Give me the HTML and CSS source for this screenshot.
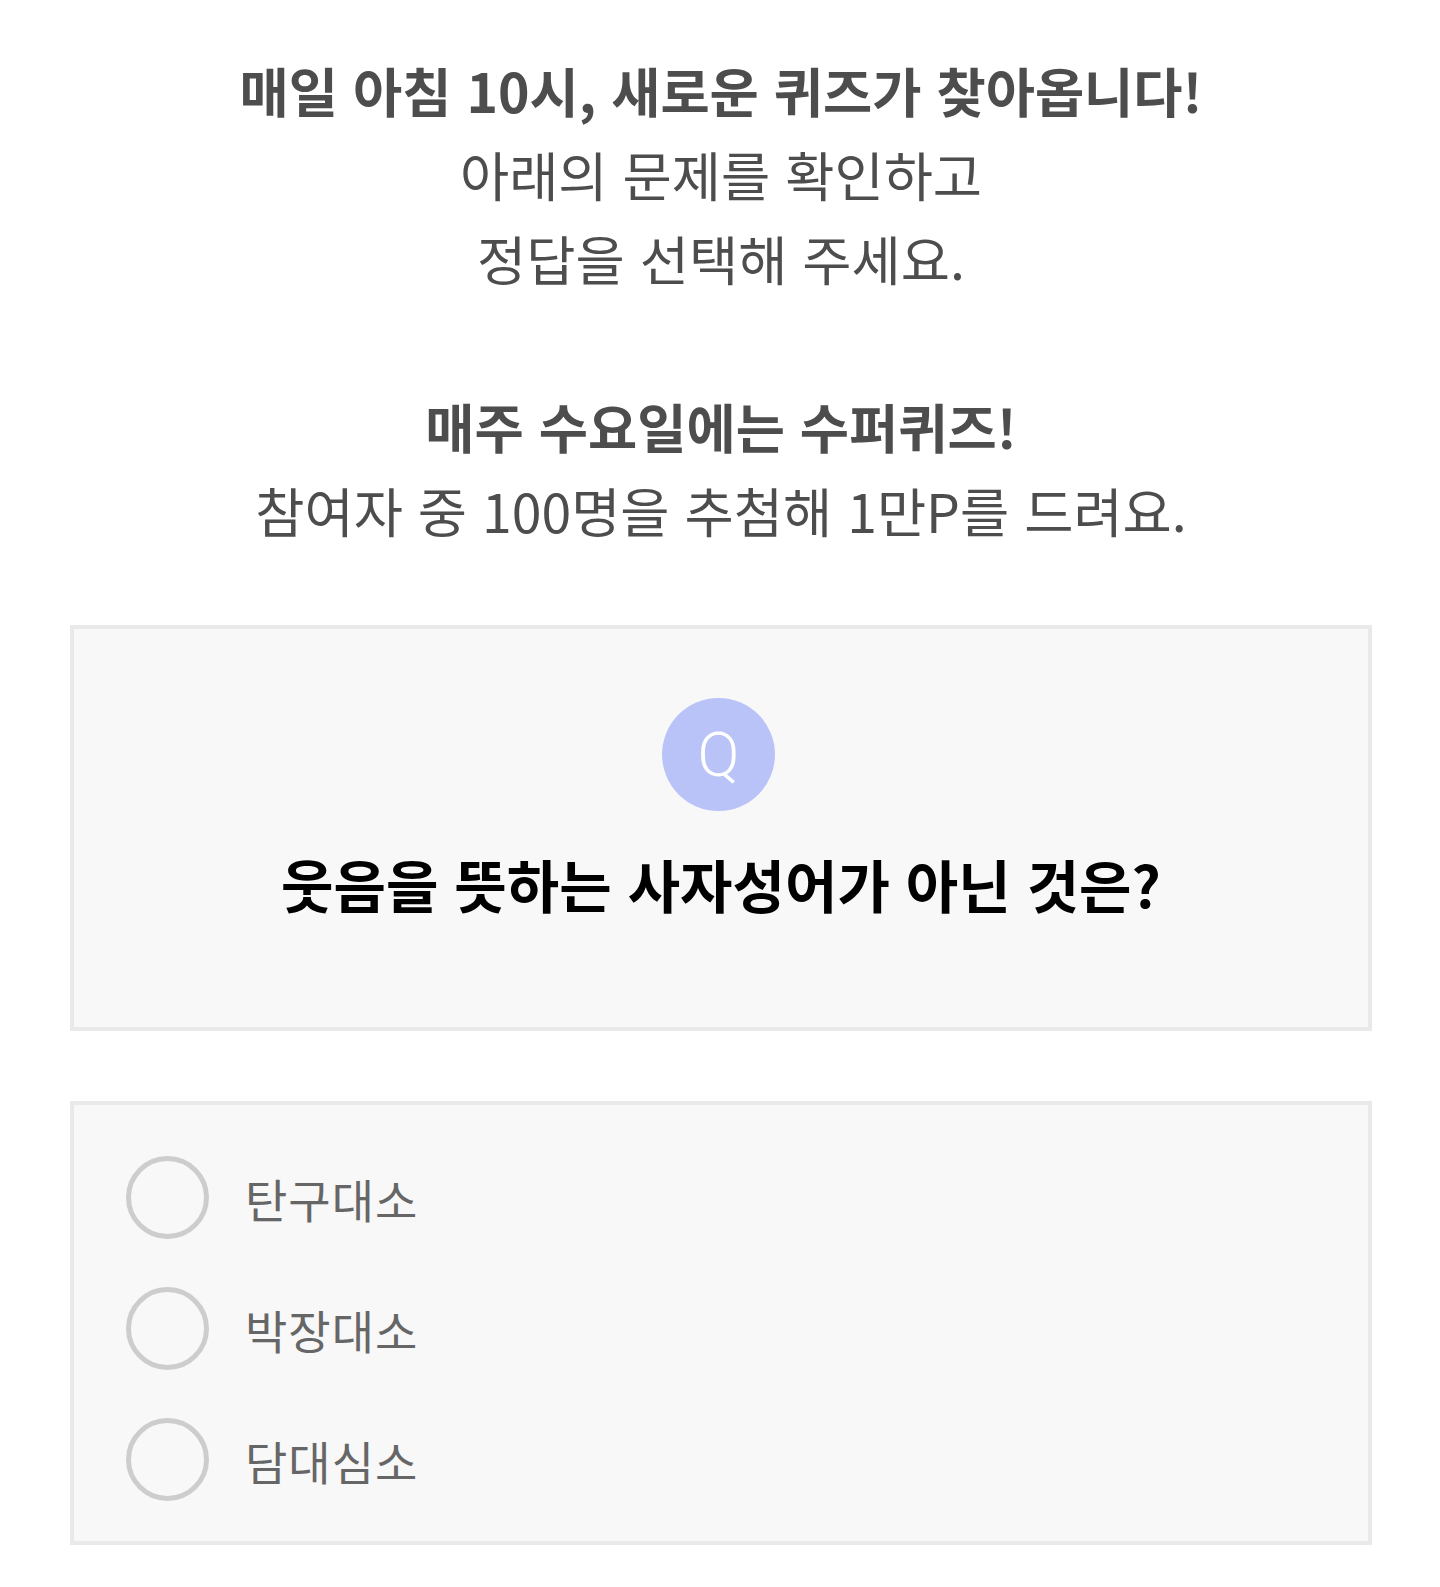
FILE: index.html
```html
<!DOCTYPE html>
<html lang="ko">
<head>
<meta charset="utf-8">
<title>오늘의 퀴즈</title>
<link rel="stylesheet" href="styles.css">
</head>
<body>
<div class="page">
  <p class="intro">
    <strong>매일 아침 10시, 새로운 퀴즈가 찾아옵니다!</strong><br>
    아래의 문제를 확인하고<br>
    정답을 선택해 주세요.<br>
    <br>
    <strong>매주 수요일에는 수퍼퀴즈!</strong><br>
    참여자 중 100명을 추첨해 1만P를 드려요.
  </p>

  <section class="quiz-box">
    <div class="q-badge">Q</div>
    <h2 class="question">웃음을 뜻하는 사자성어가 아닌 것은?</h2>
  </section>

  <ul class="options">
    <li class="option"><span class="radio"></span><span class="label">탄구대소</span></li>
    <li class="option"><span class="radio"></span><span class="label">박장대소</span></li>
    <li class="option"><span class="radio"></span><span class="label">담대심소</span></li>
  </ul>
</div>
</body>
</html>
```

FILE: styles.css
```css
html, body {
  margin: 0;
  padding: 0;
  background: #ffffff;
}

body {
  font-family: "Noto Sans CJK KR", "Noto Sans", sans-serif;
}

.page {
  padding: 48px 68px 40px 70px;
}

.intro {
  margin: 0 0 73px 0;
  text-align: center;
  font-size: 53.5px;
  line-height: 84px;
  color: #4d4d4d;
  font-weight: 400;
}

.intro strong {
  font-weight: 700;
}

.quiz-box {
  border: 4px solid #e9e9e9;
  background: #f8f8f8;
  padding: 69px 0 104px 0;
  display: flex;
  flex-direction: column;
  align-items: center;
}

.q-badge {
  width: 113px;
  height: 113px;
  margin-right: 5px;
  border-radius: 50%;
  background: #b9c3f8;
  color: #ffffff;
  font-family: "Roboto", sans-serif;
  font-weight: 300;
  font-size: 62px;
  line-height: 113px;
  text-align: center;
}

.question {
  margin: 32px 0 0 0;
  font-size: 57px;
  line-height: 80px;
  font-weight: 700;
  color: #000000;
  letter-spacing: 0;
}

.options {
  list-style: none;
  margin: 70px 0 0 0;
  border: 4px solid #e9e9e9;
  background: #f8f8f8;
  padding: 27px 52px 16px 52px;
}

.option {
  height: 131px;
  display: flex;
  align-items: center;
  gap: 36px;
}

.radio {
  width: 83px;
  height: 83px;
  box-sizing: border-box;
  border: 5px solid #cdcdcd;
  border-radius: 50%;
  flex: none;
}

.label {
  font-size: 46px;
  color: #666666;
  letter-spacing: 1px;
}
```
